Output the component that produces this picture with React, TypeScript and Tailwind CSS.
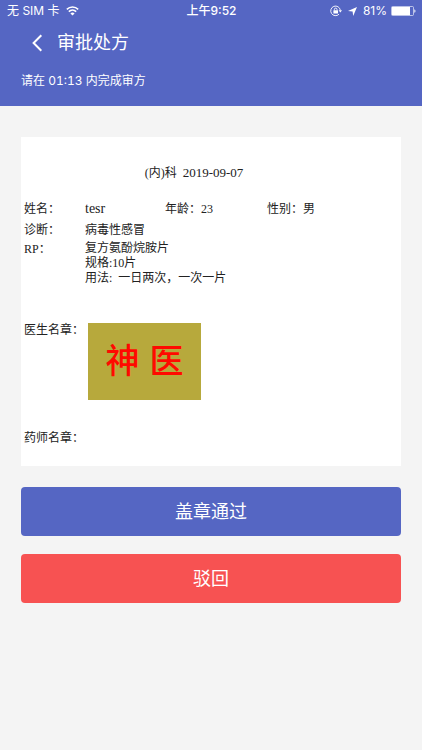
const uiFont = "font-['Inter','Noto_Sans_CJK_SC',sans-serif]";
const paperFont = "font-['Liberation_Serif','Noto_Sans_CJK_SC',serif]";

const patient = [
  { label: '年龄：', value: '23' },
  { label: '性别：', value: '男' },
];

function WifiIcon() {
  return (
    <svg width="13" height="10" viewBox="0 0 13 10" fill="none" stroke="white" strokeWidth="1.5">
      <path d="M0.8 3.4C4 0.3 9 0.3 12.2 3.4" />
      <path d="M2.8 5.6C4.9 3.6 8.1 3.6 10.2 5.6" />
      <path d="M6.5 9.6 4.4 7.4C5.6 6.3 7.4 6.3 8.6 7.4Z" fill="white" stroke="none" />
    </svg>
  );
}

function RotationLockIcon() {
  return (
    <svg width="12" height="12" viewBox="0 0 12 12" fill="none" stroke="white" strokeWidth="0.9">
      <path d="M9 9.2A4.8 4.8 0 1 1 10.3 5.2" />
      <path d="M8.6 5.2H12L10.3 7.4Z" fill="white" stroke="none" />
      <rect x="3.4" y="5.2" width="4.6" height="3.4" rx="0.4" fill="white" stroke="none" />
      <path d="M4.4 5.3V4.4a1.3 1.3 0 0 1 2.6 0v0.9" />
    </svg>
  );
}

function LocationIcon() {
  return (
    <svg width="9" height="9" viewBox="0 0 9 9" fill="white">
      <path d="M9 0 5.2 9 4.6 4.4 0 3.9Z" />
    </svg>
  );
}

function BatteryIcon() {
  return (
    <svg width="25" height="10" viewBox="0 0 25 10" fill="none">
      <rect x="0.5" y="0.5" width="22" height="9" rx="1" stroke="white" strokeOpacity="0.6" />
      <rect x="1" y="1" width="18" height="8" fill="white" />
      <path d="M23.4 3.2c1.4 0.4 1.4 3.2 0 3.6Z" fill="white" />
    </svg>
  );
}

function StatusBar() {
  return (
    <div className="grid h-[22px] grid-cols-[1fr_auto_1fr] items-center pl-[7px] pr-[6px] text-xs">
      <div className="flex items-center gap-[6px]">
        <span>无 SIM 卡</span>
        <WifiIcon />
      </div>
      <span className="font-medium">上午9:52</span>
      <div className="flex items-center justify-end">
        <RotationLockIcon />
        <span className="ml-[6px]">
          <LocationIcon />
        </span>
        <span className="ml-[6px] mr-1">81%</span>
        <BatteryIcon />
      </div>
    </div>
  );
}

export default function App() {
  return (
    <div className={`min-h-screen bg-[#f4f4f4] ${uiFont}`}>
      <header className="bg-[#5566c3] pb-4 text-white">
        <StatusBar />
        <div className="flex h-[42px] items-center gap-[14px] pl-8">
          <button type="button" aria-label="返回">
            <svg width="11" height="18" viewBox="0 0 11 18" fill="none" stroke="white" strokeWidth="2">
              <path d="M9.3 1.2 1.6 9 9.3 16.8" />
            </svg>
          </button>
          <h1 className="text-lg">审批处方</h1>
        </div>
        <p className="mt-2 px-[21px] text-xs leading-[18px] tabular-nums">请在 01:13 内完成审方</p>
      </header>

      <main className="px-[21px] pt-[31px]">
        {/* Prescription sheet */}
        <section className={`bg-white px-[3px] pb-5 pt-7 text-xs leading-4 text-[#222] ${paperFont}`}>
          <h2 className="pr-[34px] text-center">
            (内)科&nbsp; <span className="text-[13px]">2019-09-07</span>
          </h2>

          <dl className="mt-5 flex">
            <div className="flex w-[141px]">
              <dt className="w-[61px]">姓名：</dt>
              <dd className="text-sm leading-4">tesr</dd>
            </div>
            {patient.map((item) => (
              <div key={item.label} className="flex w-[102px]">
                <dt>{item.label}</dt>
                <dd>{item.value}</dd>
              </div>
            ))}
          </dl>

          <dl className="mt-[5px] grid grid-cols-[61px_1fr] gap-y-[3px]">
            <dt>诊断：</dt>
            <dd>病毒性感冒</dd>
            <dt>RP：</dt>
            <dd className="leading-[15px]">
              <p>复方氨酚烷胺片</p>
              <p>规格:10片</p>
              <p>用法:&nbsp; 一日两次，一次一片</p>
            </dd>
          </dl>

          <div className="mt-9 flex gap-1">
            <span className="w-[60px] whitespace-nowrap">医生名章：</span>
            <div className="mt-px flex h-[77px] w-[113px] items-center justify-center gap-[10px] bg-[#b7a93c] text-[34px] font-medium text-[#ff0a00]">
              <span>神</span>
              <span>医</span>
            </div>
          </div>
          <p className="mt-[30px]">药师名章：</p>
        </section>

        <div className="mt-[21px] flex flex-col gap-[18px] pb-8 text-lg text-white">
          <button type="button" className="h-[49px] rounded bg-[#5566c3]">
            盖章通过
          </button>
          <button type="button" className="h-[49px] rounded bg-[#f75252]">
            驳回
          </button>
        </div>
      </main>
    </div>
  );
}
